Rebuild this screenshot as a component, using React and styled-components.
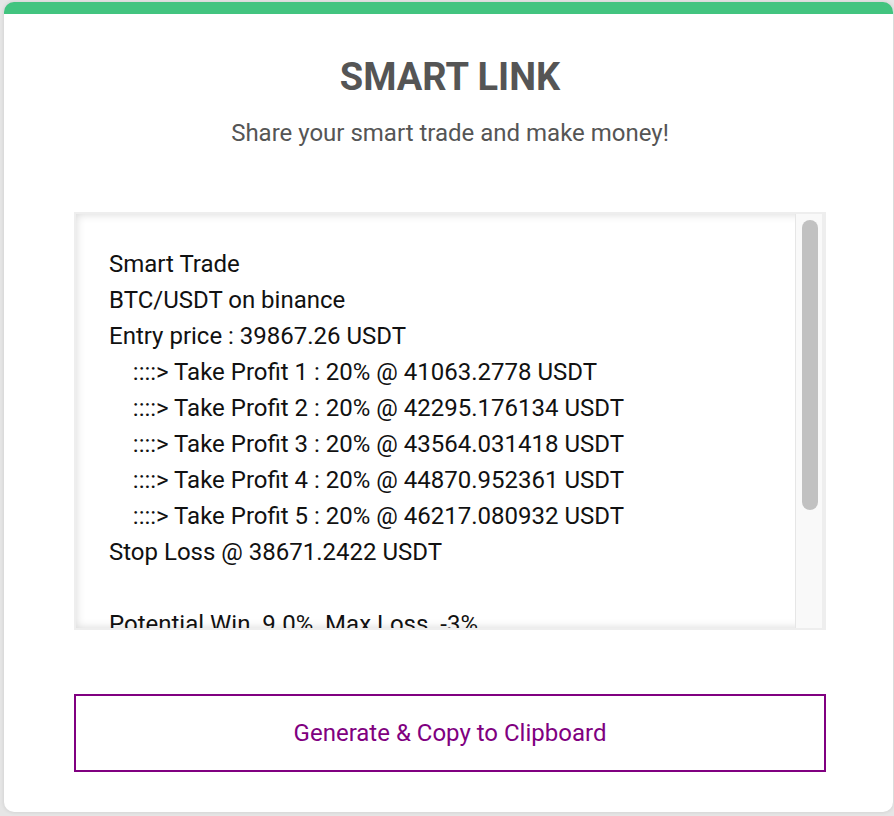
import React from "react";
import styled, { createGlobalStyle } from "styled-components";

const Global = createGlobalStyle`
  html, body { margin: 0; padding: 0; background: #e6e6e6; }
  body { font-family: Roboto, "Noto Sans", sans-serif; }
`;

const Page = styled.div`
  padding: 2px 1px 4px 4px;
  box-sizing: border-box;
  height: 816px;
`;

const Card = styled.div`
  background: #fff;
  border-top: 12px solid #42c47f;
  border-radius: 10px;
  box-shadow: 0 0 4px rgba(0, 0, 0, 0.12);
  height: 810px;
  box-sizing: border-box;
  padding: 0 67px 0 70px;
  display: flex;
  flex-direction: column;
`;

const Title = styled.h1`
  margin: 41px 0 0;
  text-align: center;
  font-size: 38px;
  line-height: 44px;
  font-weight: 700;
  color: #555;
`;

const Subtitle = styled.p`
  margin: 19px 0 0;
  text-align: center;
  font-size: 24px;
  line-height: 30px;
  color: #555;
`;

const TextBox = styled.div`
  margin-top: 64px;
  height: 418px;
  box-sizing: border-box;
  border: 2px solid #eee;
  box-shadow: inset 0 0 10px rgba(0, 0, 0, 0.16);
  display: flex;
  overflow: hidden;
`;

const TextContent = styled.div`
  flex: 1;
  overflow: hidden;
  padding: 32px 20px 0 33px;
  white-space: pre-wrap;
  font-size: 24px;
  line-height: 36px;
  color: #111;
`;

const ScrollTrack = styled.div`
  width: 16px;
  flex: none;
  background: #f9f9f9;
  border-left: 1px solid #e6e6e6;
  border-right: 2px solid #eee;
  padding: 6px 4px 0 6px;
  box-sizing: content-box;
`;

const ScrollThumb = styled.div`
  width: 16px;
  height: 290px;
  border-radius: 8px;
  background: #c1c1c1;
`;

const Button = styled.button`
  margin-top: 64px;
  height: 78px;
  border: 2px solid #800080;
  background: #fff;
  color: #800080;
  font-family: Roboto, "Noto Sans", sans-serif;
  font-size: 24px;
  cursor: pointer;
`;

const lines = [
  "Smart Trade",
  "BTC/USDT on binance",
  "Entry price : 39867.26 USDT",
  "    ::::> Take Profit 1 : 20% @ 41063.2778 USDT",
  "    ::::> Take Profit 2 : 20% @ 42295.176134 USDT",
  "    ::::> Take Profit 3 : 20% @ 43564.031418 USDT",
  "    ::::> Take Profit 4 : 20% @ 44870.952361 USDT",
  "    ::::> Take Profit 5 : 20% @ 46217.080932 USDT",
  "Stop Loss @ 38671.2422 USDT",
  "",
  "Potential Win  9.0%  Max Loss  -3%",
];

export default function App() {
  return (
    <Page>
      <Global />
      <Card>
        <Title>SMART LINK</Title>
        <Subtitle>Share your smart trade and make money!</Subtitle>
        <TextBox>
          <TextContent>{lines.join("\n")}</TextContent>
          <ScrollTrack>
            <ScrollThumb />
          </ScrollTrack>
        </TextBox>
        <Button>Generate &amp; Copy to Clipboard</Button>
      </Card>
    </Page>
  );
}
